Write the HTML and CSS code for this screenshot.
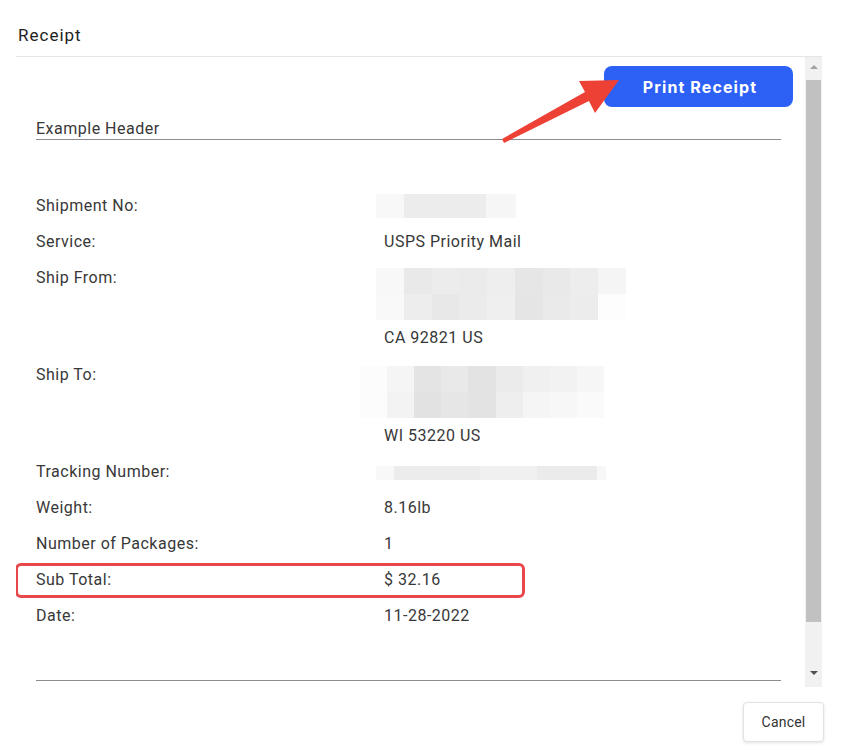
FILE: index.html
```html
<!DOCTYPE html>
<html>
<head>
<meta charset="utf-8">
<link rel="stylesheet" href="styles.css">
</head>
<body>
<div class="dialog">
  <div class="title-bar"><span class="title">Receipt</span></div>
  <div class="scroll">
    <div class="content">
      <div class="toolbar"><button class="print">Print Receipt</button></div>
      <div class="inner">
        <div class="doc-header">Example Header</div>
        <div class="rows">
          <div class="row"><div class="label">Shipment No:</div><div class="value"><div class="blur blur-ship"><i class="c1"></i><i class="c2"></i><i class="c3"></i></div></div></div>
          <div class="row"><div class="label">Service:</div><div class="value">USPS Priority Mail</div></div>
          <div class="row tall"><div class="label">Ship From:</div><div class="value"><div class="blur blur-from"><i></i><i></i><i></i><i></i><i></i><i></i><i></i><i></i><i></i><i></i><i></i><i></i><i></i><i></i><i></i><i></i><i></i><i></i></div><div class="line">CA 92821 US</div></div></div>
          <div class="row tall"><div class="label">Ship To:</div><div class="value"><div class="blur blur-to"><i></i><i></i><i></i><i></i><i></i><i></i><i></i><i></i><i></i><i></i><i></i><i></i><i></i><i></i><i></i><i></i><i></i><i></i></div><div class="line">WI 53220 US</div></div></div>
          <div class="row"><div class="label">Tracking Number:</div><div class="value"><div class="blur blur-track"></div></div></div>
          <div class="row"><div class="label">Weight:</div><div class="value">8.16lb</div></div>
          <div class="row"><div class="label">Number of Packages:</div><div class="value">1</div></div>
          <div class="row highlight"><div class="label">Sub Total:</div><div class="value">$ 32.16</div><span class="mark"></span></div>
          <div class="row"><div class="label">Date:</div><div class="value">11-28-2022</div></div>
        </div>
        <div class="doc-footer"></div>
      </div>
    </div>
    <div class="scrollbar">
      <span class="arrow up"></span>
      <div class="thumb"></div>
      <span class="arrow down"></span>
    </div>
  </div>
  <div class="actions"><button class="cancel">Cancel</button></div>
</div>
<svg class="annot-arrow" width="846" height="750" viewBox="0 0 846 750">
  <polygon fill="#ee4136" points="502,139 504,143 589,101 595,113 619,80 579,81 585,92"/>
</svg>
</body>
</html>
```
FILE: styles.css
```css
* { box-sizing: border-box; }
html, body { margin: 0; padding: 0; background: #fff; }
body {
  width: 846px; height: 750px; overflow: hidden; position: relative;
  font-family: Roboto, "Liberation Sans", Arial, sans-serif;
  color: #383838;
}
.dialog { display: flex; flex-direction: column; }
.title-bar {
  margin: 0 24px 0 16px;
  height: 57px;
  padding: 24px 0 0 2px;
  border-bottom: 1px solid #e6e6e6;
}
.title { font-size: 17px; line-height: 22px; letter-spacing: 1px; color: #222; display: block; }
.scroll {
  margin: 0 24px 0 16px;
  height: 630px;
  display: flex;
}
.content { flex: 1; overflow: hidden; }
.toolbar { display: flex; justify-content: flex-end; padding: 9px 12px 0 0; }
.print {
  width: 189px; height: 41px;
  background: #2d61f6; color: #fff; border: none; border-radius: 8px;
  font-family: Inter, Roboto, "Liberation Sans", Arial, sans-serif;
  font-weight: 700; font-size: 16px; letter-spacing: 1.1px;
  padding: 0 0 0 3px;
}
.inner { padding: 0 24px 0 20px; }
.doc-header {
  height: 33px; padding-top: 12px; line-height: 20px;
  font-size: 16px; letter-spacing: 0.5px;
  border-bottom: 1px solid #8c8c8c;
}
.rows { margin-top: 48px; }
.row { display: flex; position: relative; font-size: 16px; letter-spacing: 0.5px; line-height: 36px; min-height: 36px; }
.row.tall { min-height: 97px; }
.label { width: 348px; flex: none; }
.value { flex: 1; }
.line { height: 36px; }
.blur { position: relative; margin-left: -8px; }
.blur-ship {
  margin-top: 6px; width: 140px; height: 24px;
  display: flex;
  background: #f7f7f7;
}
.blur-ship i { display: block; height: 24px; }
.blur-ship .c1 { width: 28px; background: #f8f8f8; }
.blur-ship .c2 { width: 82px; background: #ececec; }
.blur-ship .c3 { width: 30px; background: #f6f6f6; }
.blur-from, .blur-to {
  margin-top: 8px; width: 250px; height: 52px;
  display: grid; grid-template-columns: repeat(9, 1fr); grid-template-rows: 1fr 1fr;
}
.blur-to { margin-top: 9px; margin-left: -24px; width: 244px; }
.blur i { display: block; }
.blur-from i:nth-child(1) { background: #f8f8f8; }
.blur-from i:nth-child(2) { background: #e9e9e9; }
.blur-from i:nth-child(3) { background: #ececec; }
.blur-from i:nth-child(4) { background: #ebebeb; }
.blur-from i:nth-child(5) { background: #eeeeee; }
.blur-from i:nth-child(6) { background: #e6e6e6; }
.blur-from i:nth-child(7) { background: #e9e9e9; }
.blur-from i:nth-child(8) { background: #ededed; }
.blur-from i:nth-child(9) { background: #f5f5f5; }
.blur-from i:nth-child(10) { background: #f9f9f9; }
.blur-from i:nth-child(11) { background: #ededed; }
.blur-from i:nth-child(12) { background: #e8e8e8; }
.blur-from i:nth-child(13) { background: #ebebeb; }
.blur-from i:nth-child(14) { background: #efefef; }
.blur-from i:nth-child(15) { background: #e5e5e5; }
.blur-from i:nth-child(16) { background: #eaeaea; }
.blur-from i:nth-child(17) { background: #ececec; }
.blur-from i:nth-child(18) { background: #fdfdfd; }
.blur-to i:nth-child(1) { background: #fcfcfc; }
.blur-to i:nth-child(2) { background: #f5f5f5; }
.blur-to i:nth-child(3) { background: #e4e4e4; }
.blur-to i:nth-child(4) { background: #e9e9e9; }
.blur-to i:nth-child(5) { background: #e3e3e3; }
.blur-to i:nth-child(6) { background: #ebebeb; }
.blur-to i:nth-child(7) { background: #f0f0f0; }
.blur-to i:nth-child(8) { background: #f2f2f2; }
.blur-to i:nth-child(9) { background: #f6f6f6; }
.blur-to i:nth-child(10) { background: #fcfcfc; }
.blur-to i:nth-child(11) { background: #f3f3f3; }
.blur-to i:nth-child(12) { background: #e2e2e2; }
.blur-to i:nth-child(13) { background: #e6e6e6; }
.blur-to i:nth-child(14) { background: #e3e3e3; }
.blur-to i:nth-child(15) { background: #eeeeee; }
.blur-to i:nth-child(16) { background: #f5f5f5; }
.blur-to i:nth-child(17) { background: #f7f7f7; }
.blur-to i:nth-child(18) { background: #fafafa; }
.blur-track {
  margin-top: 12px; width: 230px; height: 14px;
  background: linear-gradient(90deg, #f8f8f8 0 8%, #ececec 8% 45%, #f0f0f0 45% 70%, #ebebeb 70% 96%, #f7f7f7 96%);
}
.mark {
  position: absolute; left: -21px; top: 1px; width: 510px; height: 35px;
  border: 3px solid #e8474b; border-radius: 6px;
}
.doc-footer { margin-top: 46px; border-bottom: 1px solid #8c8c8c; }
.scrollbar {
  width: 17px; flex: none; background: #f1f1f1;
  display: flex; flex-direction: column; align-items: center;
  padding-top: 8px;
}
.arrow { width: 0; height: 0; border-left: 4px solid transparent; border-right: 4px solid transparent; }
.arrow.up { border-bottom: 4px solid #a3a3a3; }
.arrow.down { border-top: 4px solid #505050; }
.thumb { width: 15px; height: 542px; background: #c1c1c1; margin: 11px 0 49px; }
.actions { display: flex; justify-content: flex-end; padding: 15px 22px 0 0; }
.cancel {
  width: 81px; height: 40px;
  background: #fff; border: 1px solid #e2e2e2; border-radius: 4px;
  box-shadow: 0 1px 3px rgba(0,0,0,0.12);
  font-family: Roboto, "Liberation Sans", Arial, sans-serif;
  font-size: 14px; letter-spacing: 0.2px; color: #333;
}
.annot-arrow { position: absolute; left: 0; top: 0; pointer-events: none; }
```
